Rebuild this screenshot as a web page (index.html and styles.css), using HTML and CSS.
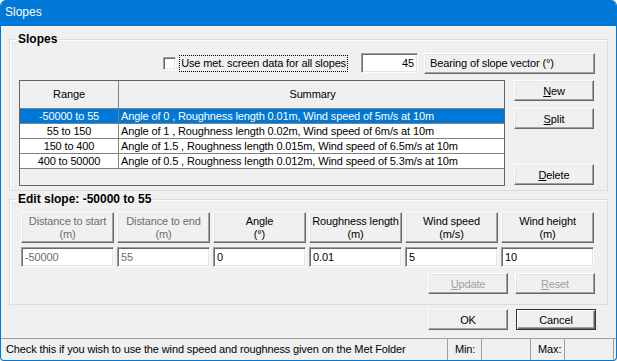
FILE: index.html
```html
<!DOCTYPE html>
<html lang="en">
<head>
    <meta charset="UTF-8">
    <meta name="viewport" content="width=device-width, initial-scale=1.0">
    <link rel="stylesheet" href="styles.css">
</head>
<body>
    <div class="window">
        <div class="titlebar">Slopes</div>
        <div class="content">
            <fieldset class="group">
                <legend>Slopes</legend>
                <div class="options-row">
                    <label class="check">
                        <span class="box"></span>
                        <span class="focus">Use met. screen data for all slopes</span>
                    </label>
                    <input class="field bearing" value="45">
                    <div class="btn bearing-btn" role="button">Bearing of slope vector (°)</div>
                </div>
                <div class="list-row">
                    <div class="grid">
                        <div class="grid-row head">
                            <div class="cell range">Range</div>
                            <div class="cell summary">Summary</div>
                        </div>
                        <div class="grid-row selected">
                            <div class="cell range">-50000 to 55</div>
                            <div class="cell summary">Angle of 0 , Roughness length 0.01m, Wind speed of 5m/s at 10m</div>
                        </div>
                        <div class="grid-row">
                            <div class="cell range">55 to 150</div>
                            <div class="cell summary">Angle of 1 , Roughness length 0.02m, Wind speed of 6m/s at 10m</div>
                        </div>
                        <div class="grid-row">
                            <div class="cell range">150 to 400</div>
                            <div class="cell summary">Angle of 1.5 , Roughness length 0.015m, Wind speed of 6.5m/s at 10m</div>
                        </div>
                        <div class="grid-row">
                            <div class="cell range">400 to 50000</div>
                            <div class="cell summary">Angle of 0.5 , Roughness length 0.012m, Wind speed of 5.3m/s at 10m</div>
                        </div>
                    </div>
                    <div class="side-buttons">
                        <div class="btn" role="button"><u>N</u>ew</div>
                        <div class="btn" role="button"><u>S</u>plit</div>
                        <div class="btn delete" role="button"><u>D</u>elete</div>
                    </div>
                </div>
            </fieldset>

            <fieldset class="group edit">
                <legend>Edit slope: -50000 to 55</legend>
                <div class="edit-grid">
                    <div class="btn col-head muted" role="button">Distance to start<br>(m)</div>
                    <div class="btn col-head muted" role="button">Distance to end<br>(m)</div>
                    <div class="btn col-head" role="button">Angle<br>(°)</div>
                    <div class="btn col-head" role="button">Roughness length<br>(m)</div>
                    <div class="btn col-head" role="button">Wind speed<br>(m/s)</div>
                    <div class="btn col-head" role="button">Wind height<br>(m)</div>
                    <input class="field muted" value="-50000">
                    <input class="field muted" value="55">
                    <input class="field" value="0">
                    <input class="field" value="0.01">
                    <input class="field" value="5">
                    <input class="field" value="10">
                </div>
                <div class="edit-actions">
                    <div class="btn disabled" role="button"><u>U</u>pdate</div>
                    <div class="btn disabled" role="button"><u>R</u>eset</div>
                </div>
            </fieldset>

            <div class="dialog-actions">
                <div class="btn" role="button">OK</div>
                <div class="btn default" role="button">Cancel</div>
            </div>
        </div>
        <div class="statusbar">
            <div class="panel message">Check this if you wish to use the wind speed and roughness given on the Met Folder</div>
            <div class="panel label">Min:</div>
            <div class="panel value"></div>
            <div class="panel label">Max:</div>
            <div class="panel value"></div>
        </div>
    </div>
</body>
</html>
```

FILE: styles.css
```css
* {
    box-sizing: border-box;
}

body {
    margin: 0;
    font-family: "Liberation Sans", Arial, sans-serif;
    font-size: 11px;
    letter-spacing: -0.13px;
    color: #000;
    background: #fff;
}

.window {
    width: 617px;
    height: 361px;
    display: flex;
    flex-direction: column;
    background-color: #f0f0f0;
    border: 1px solid #0078d7;
    border-top: none;
    border-radius: 6px 6px 4px 4px;
    overflow: hidden;
}

.titlebar {
    height: 26px;
    padding: 5px 0 0 4px;
    background-color: #0078d7;
    color: #fff;
    font-size: 12px;
    letter-spacing: 0;
    flex-shrink: 0;
}

.content {
    flex: 1;
    padding: 6px 8px 0 8px;
}

.group {
    margin: 0;
    padding: 7px 12px 4px 9px;
    border: 1px solid #dcdcdc;
    box-shadow: inset 1px 1px #fff;
    min-width: 0;
}

.group legend {
    margin-left: -3px;
    padding: 0 2px;
    font-size: 12px;
    font-weight: bold;
    letter-spacing: 0;
    line-height: 14px;
}

.btn {
    display: flex;
    align-items: center;
    justify-content: center;
    text-align: center;
    color: #000;
    background-color: #f0f0f0;
    border: 1px solid;
    border-color: #fff #696969 #696969 #fff;
    box-shadow: inset -1px -1px #a0a0a0, inset 1px 1px #e3e3e3;
    height: 21px;
    cursor: default;
}

.btn.default {
    border-color: #333;
    box-shadow: inset 1px 1px #fff, inset -1px -1px #696969, inset -2px -2px #a0a0a0;
}

.btn.disabled {
    color: #a0a0a0;
}

.field {
    font-family: inherit;
    font-size: 11px;
    letter-spacing: inherit;
    height: 20px;
    padding: 0 3px;
    background-color: #fff;
    border: 1px solid;
    border-color: #a0a0a0 #fff #fff #a0a0a0;
    box-shadow: inset 1px 1px #696969, inset -1px -1px #e3e3e3;
    outline: none;
}

.muted {
    color: #6d6d6d;
}

/* top row */
.options-row {
    display: flex;
    justify-content: flex-end;
    align-items: center;
    height: 20px;
}

.check {
    display: flex;
    align-items: center;
}

.check .box {
    width: 13px;
    height: 13px;
    background-color: #fff;
    border: 1px solid;
    border-color: #a0a0a0 #fff #fff #a0a0a0;
    box-shadow: inset 1px 1px #696969, inset -1px -1px #e3e3e3;
}

.check .focus {
    margin-left: 3px;
    padding: 1px 1px;
    border: 1px dotted #000;
    line-height: 13px;
}

.bearing {
    width: 57px;
    margin-left: 13px;
    text-align: right;
}

.bearing-btn {
    width: 171px;
    margin-left: 6px;
    justify-content: flex-start;
    padding-left: 5px;
}

/* list */
.list-row {
    display: flex;
    margin-top: 7px;
    gap: 9px;
}

.grid {
    width: 486px;
    height: 106px;
    border: 1px solid #646464;
    background-color: #f0f0f0;
}

.grid-row {
    display: grid;
    grid-template-columns: 99px 1fr;
    height: 15px;
    line-height: 14px;
    background-color: #fff;
}

.grid-row.head {
    height: 28px;
    line-height: 27px;
    background-color: #f0f0f0;
}

.grid-row.selected {
    background-color: #0078d7;
    color: #fff;
}

.cell {
    border-right: 1px solid #808080;
    border-bottom: 1px solid #808080;
    white-space: nowrap;
    overflow: hidden;
}

.cell.range {
    text-align: center;
}

.cell.summary {
    padding-left: 2px;
    border-right: none;
}

.head .cell.summary {
    text-align: center;
}

.side-buttons {
    display: flex;
    flex-direction: column;
    gap: 7px;
    width: 80px;
}

.side-buttons .delete {
    margin-top: auto;
    margin-bottom: 1px;
}

/* edit slope */
.edit {
    margin-top: 1px;
    padding: 6px 12px 10px 11px;
}

.edit legend {
    margin-left: -5px;
}

.edit-grid {
    display: grid;
    grid-template-columns: repeat(6, 93px);
    grid-template-rows: 31px 20px;
    column-gap: 3px;
    row-gap: 4px;
}

.col-head {
    height: 31px;
    line-height: 13px;
}

.btn.col-head.muted {
    color: #6d6d6d;
}

.edit-grid .field {
    width: 93px;
}

.edit-actions,
.dialog-actions {
    display: flex;
    justify-content: flex-end;
}

.edit-actions {
    margin-top: 6px;
    gap: 7px;
}

.edit-actions .btn {
    width: 80px;
}

.dialog-actions {
    margin-top: 4px;
    padding-right: 12px;
    gap: 8px;
}

.dialog-actions .btn {
    width: 80px;
}

/* status bar */
.statusbar {
    display: flex;
    height: 22px;
    border-top: 1px solid #a0a0a0;
    flex-shrink: 0;
}

.panel {
    line-height: 20px;
    white-space: nowrap;
}

.panel.message {
    width: 447px;
    padding-left: 5px;
    border-right: 1px solid #a0a0a0;
}

.panel.label {
    width: 33px;
    padding-left: 7px;
}

.panel.value {
    width: 50px;
    border-left: 1px solid #a0a0a0;
    border-right: 1px solid #a0a0a0;
}
```
